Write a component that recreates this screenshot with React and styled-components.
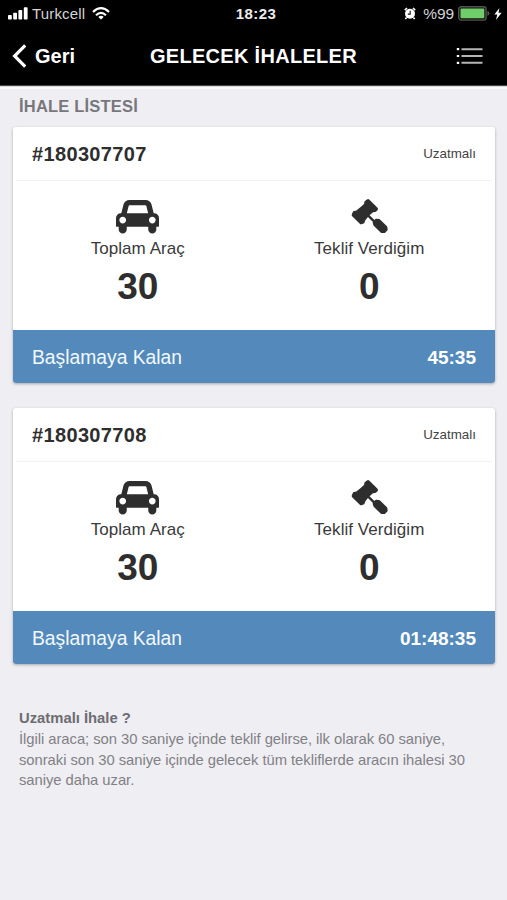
import React from 'react';
import styled, { createGlobalStyle } from 'styled-components';

const GlobalStyle = createGlobalStyle`
   * {
      box-sizing: border-box;
   }
   body {
      margin: 0;
      background: #efeef3;
      font-family: 'Liberation Sans', Arial, sans-serif;
      color: #2e2e2e;
   }
`;
const Screen = styled.div`
   width: 100%;
   min-height: 900px;
   background: #efeef3;
`;
const Top = styled.header`
   height: 86px;
   background: #000;
   color: #fff;
   border-bottom: 1px solid #4a4748;
   box-shadow: 0 1px 0 #d8d6da, 0 3px 0 #fafafc;
`;
const StatusBar = styled.div`
   display: grid;
   grid-template-columns: 1fr auto 1fr;
   align-items: center;
   height: 27px;
   padding: 0 5px 0 8px;
`;
const StatusSide = styled.div`
   display: flex;
   align-items: center;
   justify-content: ${(props) => (props.$end ? 'flex-end' : 'flex-start')};
   color: #d4d4d4;
   font-size: 15px;
   line-height: 27px;
`;
const Carrier = styled.span`
   margin: 0 7px 0 4px;
   letter-spacing: 0.15px;
`;
const Clock = styled.span`
   font-size: 15px;
   font-weight: bold;
   letter-spacing: 0.4px;
   color: #ececec;
   padding-left: 2px;
`;
const Percent = styled.span`
   margin: 0 4px 0 7px;
   font-size: 15.5px;
   letter-spacing: -0.1px;
`;
const NavBar = styled.nav`
   display: grid;
   grid-template-columns: 1fr auto 1fr;
   align-items: center;
   height: 58px;
   padding: 0 24px 0 12px;
`;
const Back = styled.a`
   display: flex;
   align-items: center;
   gap: 7px;
   font-size: 20px;
   font-weight: bold;
`;
const Title = styled.h1`
   margin: 0 -6px 0 6px;
   font-size: 20px;
   letter-spacing: 0.3px;
`;
const MenuButton = styled.a`
   display: flex;
   justify-content: flex-end;
`;
const Content = styled.main`
   padding: 10px 12px 0 13px;
`;
const ListTitle = styled.h2`
   margin: 0 0 11px;
   padding-left: 6px;
   font-size: 16.5px;
   line-height: 20px;
   letter-spacing: 0.2px;
   color: #77777b;
`;
const Card = styled.section`
   height: 256px;
   margin-bottom: 25px;
   border-radius: 3px;
   background: #fff;
   box-shadow: 0 1px 3px rgba(0, 0, 0, 0.3);
   overflow: hidden;
`;
const CardHeader = styled.div`
   display: flex;
   align-items: center;
   justify-content: space-between;
   height: 54px;
   margin: 0 3px;
   padding: 1px 16px 0 16px;
   border-bottom: 1px solid #f3f3f3;
`;
const Code = styled.strong`
   font-size: 20px;
   letter-spacing: 0.35px;
`;
const Kind = styled.span`
   padding-bottom: 2px;
   font-size: 13.4px;
   color: #444;
`;
const Stats = styled.div`
   display: grid;
   grid-template-columns: 1fr 1fr;
   height: 149px;
   padding: 15px 10px 0 9px;
`;
const Stat = styled.div`
   display: flex;
   flex-direction: column;
   align-items: center;
`;
const IconBox = styled.div`
   display: flex;
   align-items: center;
   justify-content: center;
   height: 40px;
`;
const StatLabel = styled.span`
   margin-top: 2px;
   font-size: 17px;
   line-height: 22px;
   letter-spacing: 0.05px;
   color: #3a3a3a;
`;
const StatValue = styled.strong`
   margin-top: 7px;
   font-size: 37px;
   line-height: 40px;
`;
const Remaining = styled.div`
   display: flex;
   align-items: center;
   justify-content: space-between;
   height: 53px;
   padding: 2px 19px 0 19px;
   background: #538abb;
   color: #f2f8ff;
   font-size: 19.3px;
`;
const Time = styled.strong`
   font-size: 19px;
   color: #fff;
`;
const Note = styled.div`
   margin-top: 44px;
   padding: 0 6px;
   font-size: 14.8px;
   line-height: 20.8px;
   color: #818185;
`;
const NoteTitle = styled.strong`
   display: block;
   color: #6d6d71;
`;
const NoteLine = styled.div`
   white-space: nowrap;
   letter-spacing: -0.045px;
`;

const SignalIcon = () => (
   <svg width="20" height="13" viewBox="0 0 20 13" fill="#fff">
      <rect x="0" y="8" width="3.8" height="4.5" rx="0.8" />
      <rect x="5.2" y="5.8" width="3.8" height="6.7" rx="0.8" />
      <rect x="10.4" y="3" width="3.8" height="9.5" rx="0.8" />
      <rect x="15.8" y="0.3" width="3.8" height="12.2" rx="0.8" />
   </svg>
);
const WifiIcon = () => (
   <svg width="18" height="13" viewBox="0 0 18 13" fill="none" stroke="#fff" strokeWidth="2.2">
      <path d="M1 5Q9-2.6 17 5" />
      <path d="M4 8.2Q9 3.6 14 8.2" />
      <path d="M9 12.5L6.3 9.9Q9 7.6 11.7 9.9Z" fill="#fff" stroke="none" />
   </svg>
);
const AlarmIcon = () => (
   <svg width="12" height="13" viewBox="0 0 12 13" fill="none">
      <circle cx="6" cy="6.8" r="5" fill="#fff" />
      <path d="M0.8 3.1L3 1M11.2 3.1L9 1M2.6 10.6L1.3 12M9.4 10.6L10.7 12" stroke="#fff" strokeWidth="1.6" />
      <path d="M6.2 3.8V7.1H3.8" stroke="#111" strokeWidth="1.1" />
   </svg>
);
const BatteryIcon = () => (
   <svg width="32" height="15" viewBox="0 0 32 15">
      <rect x="0.7" y="0.7" width="27.4" height="13.4" rx="2.6" fill="#10140f" stroke="#505350" strokeWidth="1.4" />
      <rect x="2.5" y="2.5" width="23.8" height="9.8" rx="1" fill="#6fce69" />
      <path d="M29.4 5Q31.4 5.4 31.4 7.4T29.4 9.8Z" fill="#555" />
   </svg>
);
const BoltIcon = () => (
   <svg width="12" height="12" viewBox="-4 0 12 12" fill="#fff">
      <path d="M5.4 0L0.4 6.6H3.3L2 12L7.6 4.8H4.5Z" />
   </svg>
);
const BackIcon = () => (
   <svg width="16" height="24" viewBox="0 0 16 24" fill="none" stroke="#fff" strokeWidth="3.2">
      <path d="M13.2 1.3L2.6 12L13.2 22.7" />
   </svg>
);
const MenuIcon = () => (
   <svg width="27" height="18" viewBox="0 0 27 18">
      <path d="M5.5 2.2H26.5M5.5 9H26.5M5.5 15.8H26.5" stroke="#b5b5b5" strokeWidth="2" />
      <path d="M0.8 2.2H3.2M0.8 9H3.2M0.8 15.8H3.2" stroke="#fff" strokeWidth="2.2" />
   </svg>
);
const CarIcon = () => (
   <svg width="43" height="38" viewBox="0 0 2048 1792" fill="#2e2e2e">
      <path d="M480 1088q0-66-47-113t-113-47-113 47-47 113 47 113 113 47 113-47 47-113zm36-320h1016l-89-357q-2-8-14-17.5t-21-9.5h-768q-9 0-21 9.5t-14 17.5zm1372 320q0-66-47-113t-113-47-113 47-47 113 47 113 113 47 113-47 47-113zm160-96v384q0 14-9 23t-23 9h-96v128q0 80-56 136t-136 56-136-56-56-136v-128h-1024v128q0 80-56 136t-136 56-136-56-56-136v-128h-96q-14 0-23-9t-9-23v-384q0-93 65.5-158.5t158.5-65.5h28l105-419q23-94 104-157.5t179-63.5h768q98 0 179 63.5t104 157.5l105 419h28q93 0 158.5 65.5t65.5 158.5z" />
   </svg>
);
const GavelIcon = () => (
   <svg width="37" height="37" viewBox="19 18 111 111" fill="#2e2e2e" stroke="#2e2e2e" strokeLinejoin="round" strokeLinecap="round">
      <path d="M70 26L95 51L91 55L83 56Q69 66 57 83L55 90L49 92L26 69L29 62L37 60Q52 49 63 38L64 31Z" strokeWidth="10" />
      <path d="M70 70L92 92" strokeWidth="7" fill="none" />
      <path d="M95 86L102 87L122 106L123 112L118 117L112 117L92 98L90 92Z" strokeWidth="12" />
   </svg>
);

const auctions = [
   { code: '#180307707', total: 30, bids: 0, time: '45:35' },
   { code: '#180307708', total: 30, bids: 0, time: '01:48:35' },
];

function Auction({ code, total, bids, time }) {
   return (
      <Card>
         <CardHeader>
            <Code>{code}</Code>
            <Kind>Uzatmalı</Kind>
         </CardHeader>
         <Stats>
            <Stat>
               <IconBox>
                  <CarIcon />
               </IconBox>
               <StatLabel>Toplam Araç</StatLabel>
               <StatValue>{total}</StatValue>
            </Stat>
            <Stat>
               <IconBox>
                  <GavelIcon />
               </IconBox>
               <StatLabel>Teklif Verdiğim</StatLabel>
               <StatValue>{bids}</StatValue>
            </Stat>
         </Stats>
         <Remaining>
            <span>Başlamaya Kalan</span>
            <Time>{time}</Time>
         </Remaining>
      </Card>
   );
}

function App() {
   return (
      <Screen>
         <GlobalStyle />
         <Top>
            <StatusBar>
               <StatusSide>
                  <SignalIcon />
                  <Carrier>Turkcell</Carrier>
                  <WifiIcon />
               </StatusSide>
               <Clock>18:23</Clock>
               <StatusSide $end>
                  <AlarmIcon />
                  <Percent>%99</Percent>
                  <BatteryIcon />
                  <BoltIcon />
               </StatusSide>
            </StatusBar>
            <NavBar>
               <Back>
                  <BackIcon />
                  Geri
               </Back>
               <Title>GELECEK İHALELER</Title>
               <MenuButton>
                  <MenuIcon />
               </MenuButton>
            </NavBar>
         </Top>
         <Content>
            <ListTitle>İHALE LİSTESİ</ListTitle>
            {auctions.map((item) => (
               <Auction key={item.code} {...item} />
            ))}
            <Note>
               <NoteTitle>Uzatmalı İhale ?</NoteTitle>
               <NoteLine>İlgili araca; son 30 saniye içinde teklif gelirse, ilk olarak 60 saniye,</NoteLine>
               <NoteLine>sonraki son 30 saniye içinde gelecek tüm tekliflerde aracın ihalesi 30</NoteLine>
               <NoteLine>saniye daha uzar.</NoteLine>
            </Note>
         </Content>
      </Screen>
   );
}

export default App;
